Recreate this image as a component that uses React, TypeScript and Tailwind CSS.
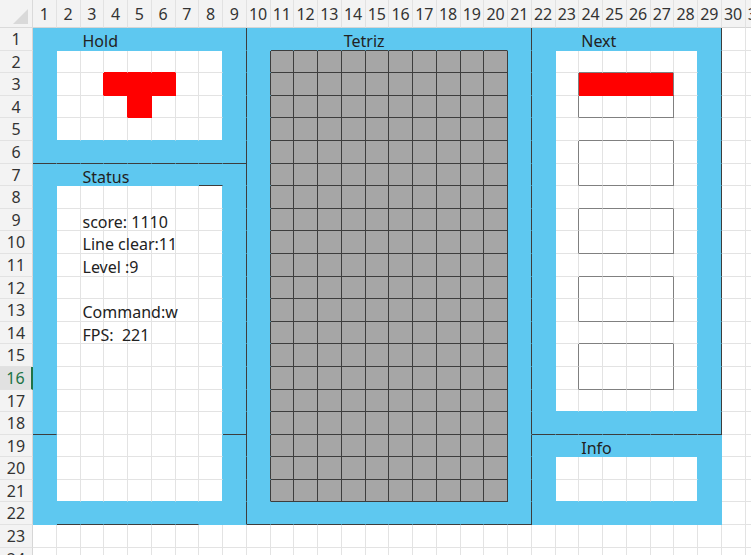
type Fill = "blue" | "white" | "gray" | "red";
type Edge = "blue" | "grid" | "dark" | "box" | "red";

const ROWS = 24;
const COLS = 31;

const BG: Record<Fill, string> = {
  blue: "bg-[#5ec8f0]",
  white: "bg-white",
  gray: "bg-[#a6a6a6]",
  red: "bg-[#ff0000]",
};

const RIGHT: Record<Edge, string> = {
  blue: "border-r-[#5ec8f0]",
  grid: "border-r-[#e3e3e3]",
  dark: "border-r-[#3d3d3d]",
  box: "border-r-[#808080]",
  red: "border-r-[#ff0000]",
};

const BOTTOM: Record<Edge, string> = {
  blue: "border-b-[#5ec8f0]",
  grid: "border-b-[#e3e3e3]",
  dark: "border-b-[#3d3d3d]",
  box: "border-b-[#808080]",
  red: "border-b-[#ff0000]",
};

// next-piece boxes: [top row, bottom row], cols 24-27
const BOXES: [number, number][] = [
  [3, 4],
  [6, 7],
  [9, 10],
  [12, 13],
  [15, 16],
];

// text that sits in a cell and spills over to the right, like a sheet does
const TEXTS: Record<string, string> = {
  "1-3": "Hold",
  "1-14": "Tetriz",
  "1-24": "Next",
  "7-3": "Status",
  "9-3": "score: 1110",
  "10-3": "Line clear:11",
  "11-3": "Level :9",
  "13-3": "Command:w",
  "14-3": "FPS:  221",
  "19-24": "Info",
};

const inR = (v: number, a: number, b: number) => v >= a && v <= b;

function fillOf(r: number, c: number): Fill {
  // Hold
  if (inR(r, 1, 6) && inR(c, 1, 9)) {
    if ((r === 3 && inR(c, 4, 6)) || (r === 4 && c === 5)) return "red";
    return inR(r, 2, 5) && inR(c, 2, 8) ? "white" : "blue";
  }
  // Status
  if (inR(r, 7, 22) && inR(c, 1, 9)) {
    return inR(r, 8, 21) && inR(c, 2, 8) ? "white" : "blue";
  }
  // Tetriz
  if (inR(r, 1, 22) && inR(c, 10, 21)) {
    return inR(r, 2, 21) && inR(c, 11, 20) ? "gray" : "blue";
  }
  // Next
  if (inR(r, 1, 18) && inR(c, 22, 29)) {
    if (r === 3 && inR(c, 24, 27)) return "red";
    return inR(r, 2, 17) && inR(c, 23, 28) ? "white" : "blue";
  }
  // Info
  if (inR(r, 19, 22) && inR(c, 22, 29)) {
    return inR(r, 20, 21) && inR(c, 23, 28) ? "white" : "blue";
  }
  return "white";
}

function rightEdge(r: number, c: number): Edge {
  if ((c === 9 || c === 21) && inR(r, 1, 22)) return "dark";
  if (c === 29 && inR(r, 1, 18)) return "dark";
  if (c === 10 && inR(r, 2, 21)) return "dark";
  if ((c === 23 || c === 27) && BOXES.some(([t, b]) => inR(r, t, b))) return "box";
  const a = fillOf(r, c);
  const b = fillOf(r, c + 1);
  if (a === "gray") return "dark";
  if (a === "blue" || b === "blue") return "blue";
  if (a === "red" || b === "red") return "red";
  return "grid";
}

function bottomEdge(r: number, c: number): Edge {
  if (r === 6 && inR(c, 1, 9)) return "dark";
  if (r === 7 && c === 8) return "dark";
  if (r === 18 && (c === 1 || c === 9 || inR(c, 22, 29))) return "dark";
  if (r === 22 && (inR(c, 2, 7) || inR(c, 10, 21))) return "dark";
  if (r === 1 && inR(c, 11, 20)) return "dark";
  if (inR(c, 24, 27) && BOXES.some(([t, b]) => r === t - 1 || r === b)) return "box";
  const a = fillOf(r, c);
  const b = fillOf(r + 1, c);
  if (a === "gray") return "dark";
  if (a === "blue" || b === "blue") return "blue";
  if (a === "red" || b === "red") return "red";
  return "grid";
}

const rows = Array.from({ length: ROWS }, (_, i) => i + 1);
const cols = Array.from({ length: COLS }, (_, i) => i + 1);

function Cell({ r, c }: { r: number; c: number }) {
  const text = TEXTS[`${r}-${c}`];
  const base = `border-r border-b ${BG[fillOf(r, c)]} ${RIGHT[rightEdge(r, c)]} ${BOTTOM[bottomEdge(r, c)]}`;
  if (!text) return <div className={base} />;
  return (
    <div className={`${base} relative z-10 overflow-visible whitespace-pre pl-[2px] pt-[3px] leading-[20px]`}>
      {text}
    </div>
  );
}

export default function App() {
  return (
    <div
      className="w-[751px] h-[555px] overflow-hidden bg-white text-[#222] text-[16px]"
      style={{ fontFamily: '"Noto Sans", "Noto Sans CJK SC", sans-serif' }}
    >
      <div className="grid grid-cols-[33px_repeat(31,23.75px)] grid-rows-[28px_repeat(24,22.6px)]">
        {/* corner */}
        <div className="bg-[#f3f3f3] border-r border-b border-[#dadada] flex items-end justify-end pr-[3px] pb-[2px]">
          <svg width="16" height="16" viewBox="0 0 16 16">
            <polygon points="15,0 15,15 0,15" fill="#d9d9d9" />
          </svg>
        </div>

        {/* column headers */}
        {cols.map((c) => (
          <div
            key={`h${c}`}
            className="bg-[#f3f3f3] border-r border-b border-r-[#e2e2e2] border-b-[#d6d6d6] flex items-end justify-center pb-[1px] text-[#333] whitespace-nowrap"
          >
            {c}
          </div>
        ))}

        {rows.map((r) => [
          <div
            key={`rh${r}`}
            className={
              r === 16
                ? "bg-[#e1e1e1] border-b border-r-2 border-b-[#e2e2e2] border-r-[#217346] flex justify-center pt-[1px] leading-[20px] text-[#217346]"
                : "bg-[#f3f3f3] border-b border-r border-b-[#e2e2e2] border-r-[#d6d6d6] flex justify-center pt-[1px] leading-[20px] text-[#333]"
            }
          >
            {r}
          </div>,
          ...cols.map((c) => <Cell key={`${r}-${c}`} r={r} c={c} />),
        ])}
      </div>
    </div>
  );
}
